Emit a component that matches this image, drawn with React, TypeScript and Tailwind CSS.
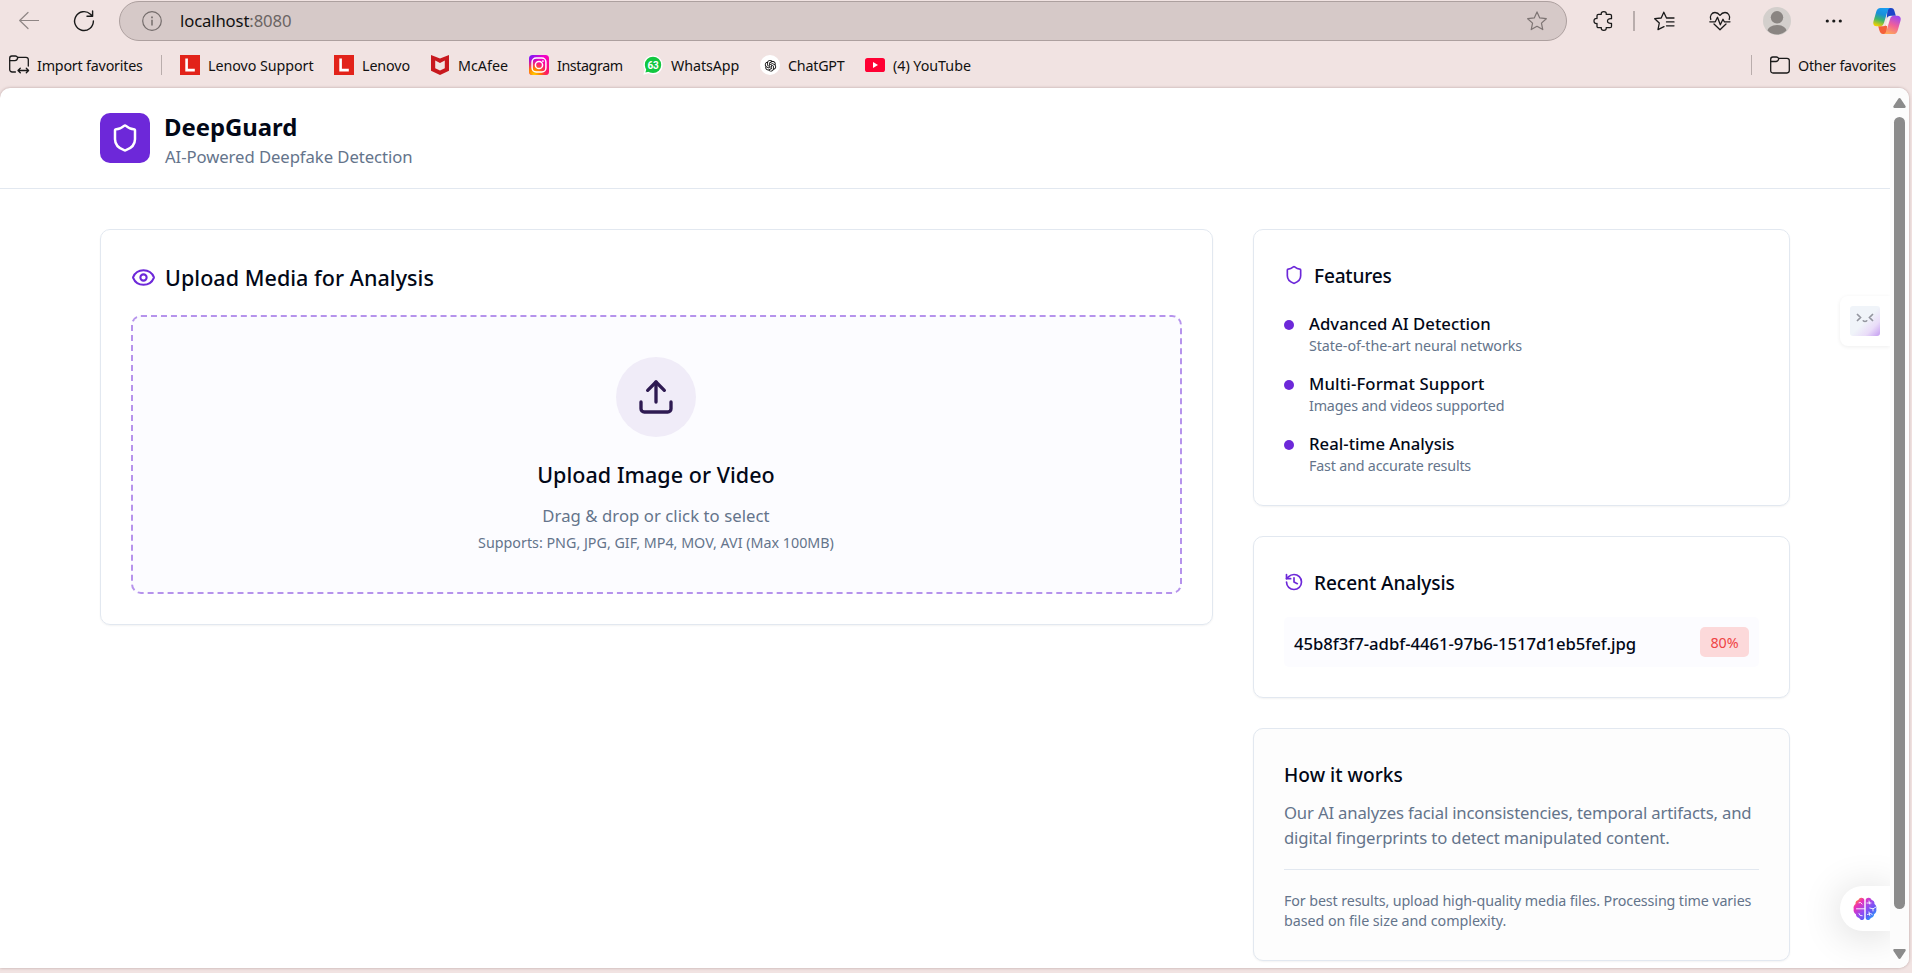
import type { ReactNode } from "react";
import { Eye, History, Shield, Upload } from "lucide-react";
import { AiOutlineOpenAI } from "react-icons/ai";

const features = [
  { title: "Advanced AI Detection", text: "State-of-the-art neural networks", titleClass: "tracking-[0.03px]", textClass: "tracking-[-0.08px]" },
  { title: "Multi-Format Support", text: "Images and videos supported", titleClass: "tracking-[0.14px]", textClass: "tracking-[-0.17px]" },
  { title: "Real-time Analysis", text: "Fast and accurate results", titleClass: "tracking-[0.02px]", textClass: "tracking-[-0.19px]" },
];

function Bookmark({ icon, label, className }: { icon: ReactNode; label: string; className: string }) {
  return (
    <div className={`flex h-full shrink-0 items-center gap-2 whitespace-nowrap ${className}`}>
      <span className="flex size-5 shrink-0 items-center justify-center">{icon}</span>
      <span className="pt-0.5">{label}</span>
    </div>
  );
}

function LenovoIcon() {
  return (
    <svg viewBox="0 0 20 20" className="size-5">
      <path d="M0 0h20v20H0z" fill="#e2231a" />
      <path d="M6.6 3.5v11.6h8.2" fill="none" stroke="#fff" strokeWidth="2.6" />
    </svg>
  );
}

function McAfeeIcon() {
  return (
    <svg viewBox="0 0 20 20" className="size-5">
      <path d="M1 0l9 3.6L19 0v15.8L10 20l-9-4.2z" fill="#c8181e" />
      <path d="M5.2 5.6L10 7.9l4.8-2.3v7.6L10 15.5l-4.8-2.3z" fill="#f1e3e2" />
    </svg>
  );
}

function InstagramIcon() {
  return (
    <svg viewBox="0 0 20 20" className="size-5">
      <defs>
        <linearGradient id="ig-base" x1="0" y1="0" x2="1" y2="0.9">
          <stop offset="0" stopColor="#6a1cff" />
          <stop offset="0.45" stopColor="#f500c8" />
          <stop offset="1" stopColor="#ff0f6b" />
        </linearGradient>
        <radialGradient id="ig-warm" cx="0.25" cy="1" r="0.85">
          <stop offset="0" stopColor="#ffd000" />
          <stop offset="0.4" stopColor="#ff7a00" />
          <stop offset="1" stopColor="#ff0069" stopOpacity="0" />
        </radialGradient>
      </defs>
      <rect width="20" height="20" rx="3.5" fill="url(#ig-base)" />
      <rect width="20" height="20" rx="3.5" fill="url(#ig-warm)" />
      <rect x="3.1" y="3.1" width="13.8" height="13.8" rx="4" fill="none" stroke="#fff" strokeWidth="1.5" />
      <circle cx="10" cy="10" r="3.6" fill="none" stroke="#fff" strokeWidth="1.5" />
      <circle cx="13.9" cy="6.1" r="0.9" fill="#fff" />
    </svg>
  );
}

function WhatsAppIcon() {
  return (
    <svg viewBox="0 0 20 20" className="size-5">
      <path d="M10.2.6a9.4 9.4 0 1 1-4.6 17.6L.3 19.7l1.4-5.1A9.4 9.4 0 0 1 10.2.6z" fill="#fff" />
      <circle cx="10" cy="9.9" r="8.2" fill="#12c740" />
      <path d="M2.4 17.6l1.2-4.4 3.2 3.3z" fill="#12c740" />
      <text x="10.1" y="13.6" textAnchor="middle" fontFamily="Roboto, sans-serif" fontWeight="700" fontSize="10" fill="#fff">63</text>
    </svg>
  );
}

function YouTubeIcon() {
  return (
    <svg viewBox="0 0 20 20" className="size-5">
      <rect y="3" width="20" height="14" rx="2.6" fill="#ff0033" />
      <path d="M8 7v6l5-3z" fill="#fff" />
    </svg>
  );
}

function FolderIcon({ importing = false }: { importing?: boolean }) {
  return (
    <svg viewBox="0 0 20 20" className="size-5 overflow-visible" fill="none" stroke="#1a1a1a" strokeWidth="1.3" strokeLinecap="round" strokeLinejoin="round">
      {importing ? (
        <>
          <path d="M6.4 17H3.2C1.7 17 .7 16 .7 14.5V3.2C.7 1.9 1.5 1 2.8 1H6.5C7.3 1 8 1.4 8.6 2.3H17C18.5 2.3 19.3 3.2 19.3 4.6V11" />
          <path d="M.7 5.6H6C7.2 5.6 8.3 4.8 8.9 2.5" />
          <path d="M9.3 15.5H19.3M11.3 13.3L9 15.5 11.3 17.8M17.3 13.3L19.6 15.5 17.3 17.8" />
        </>
      ) : (
        <>
          <path d="M.7 4.2C.7 2.8 1.5 2 2.8 2H6.5C7.3 2 8 2.4 8.6 3.4H17C18.5 3.4 19.3 4.2 19.3 5.6V15.6C19.3 17.2 18.5 18 17 18H3C1.5 18 .7 17.2 .7 15.6z" />
          <path d="M.7 6.5H6C7.2 6.5 8.3 5.6 8.9 3.6" />
        </>
      )}
    </svg>
  );
}

function StarIcon({ className }: { className: string }) {
  return (
    <svg viewBox="0 0 20 20" className={className} fill="none" stroke="currentColor" strokeWidth="1.2" strokeLinejoin="round">
      <path d="M10 .9l2.75 6 6.55.8-4.85 4.4 1.3 6.5L10 15.3l-5.75 3.3 1.3-6.5L.7 7.7l6.55-.8z" />
    </svg>
  );
}

function CopilotIcon() {
  return (
    <svg viewBox="0 0 28 26" className="h-[26px] w-7">
      <defs>
        <linearGradient id="cp-left" x1="0.6" y1="0" x2="0.3" y2="1">
          <stop offset="0" stopColor="#1a9df0" />
          <stop offset="0.35" stopColor="#1a8fd8" />
          <stop offset="0.65" stopColor="#3fb56a" />
          <stop offset="1" stopColor="#f0d000" />
        </linearGradient>
        <linearGradient id="cp-right" x1="0.7" y1="0" x2="0.3" y2="1">
          <stop offset="0" stopColor="#a048f0" />
          <stop offset="0.5" stopColor="#f0609a" />
          <stop offset="1" stopColor="#ffa858" />
        </linearGradient>
      </defs>
      <path d="M14.5 0H18c2 0 2.9 1.2 3.5 3.2l1.3 4.6H18c-2.2 0-3.5.8-4.2 2.6z" fill="#1c46c8" />
      <path d="M13.5 26H10c-2 0-2.9-1.2-3.500-3.2l-1.3-4.6H10c2.2 0 3.5-.8 4.2-2.6z" fill="#f4603a" />
      <path d="M7.5 0H17.5C15.3.4 14.7 2.5 14 4.8L11 14.8C10.2 17.3 9 18.2 6.8 18.2H3.6C.9 18.2-.3 16.2.5 13.2L3.3 3.6C4 1.2 5.2 0 7.5 0z" fill="url(#cp-left)" />
      <path d="M20.5 26H10.5C12.7 25.6 13.3 23.5 14 21.2L17 11.2C17.8 8.7 19 7.8 21.2 7.8H24.4C27.1 7.8 28.3 9.8 27.5 12.8L24.7 22.4C24 24.8 22.8 26 20.5 26z" fill="url(#cp-right)" />
      <path d="M12.6 17.8L15.2 9.6Q15.8 8 17.6 8H18.600Q17 8.8 16.400 10.8L14.400 17.6Q14 18.4 12.600 17.8z" fill="#fbeef0" />
    </svg>
  );
}

function BrainIcon() {
  return (
    <svg viewBox="0 0 24 24" className="h-6 w-6">
      <defs>
        <linearGradient id="brain-fill" x1="0.1" y1="0.05" x2="0.95" y2="0.9">
          <stop offset="0" stopColor="#ff9a1f" />
          <stop offset="0.2" stopColor="#ee2fb4" />
          <stop offset="0.5" stopColor="#9a4bf0" />
          <stop offset="0.75" stopColor="#5b5cf5" />
          <stop offset="1" stopColor="#1fb4ff" />
        </linearGradient>
      </defs>
      <path
        d="M11.3 2.8C11 1.3 9.7.6 8.3.7 6.7.8 5.6 1.8 5.4 3.1 3.5 3.5 2.3 5 2.5 7 .9 8 .2 10 .7 12c-.5 2.2.4 4.3 2.2 5.2.1 2 1.4 3.5 3.3 3.8.6 1.4 1.8 2.2 3.2 2 1.2-.2 1.9-1.2 1.9-2.5zM12.7 2.8C13 1.3 14.3.6 15.7.7c1.6.1 2.7 1.1 2.9 2.4 1.9.4 3.1 1.9 2.9 3.900C23.1 8 23.8 10 23.3 12c.5 2.2-.4 4.3-2.2 5.2-.1 2-1.4 3.5-3.3 3.8-.6 1.4-1.8 2.2-3.2 2-1.2-.2-1.9-1.2-1.9-2.5z"
        fill="url(#brain-fill)"
      />
      <path d="M11.5 11.8H3.5M6 5.8l1.5-.3 1.6 1.5M6 16.5l1.2 2 2 .2M14 6h4M16 4l.7 3M14.5 17.5l3.2-1 1.5 1M16 15l.8 3.5M23 10l-3 1.8-3.2-.8M20 12v2" fill="none" stroke="#fff" strokeWidth="0.9" strokeLinecap="round" />
    </svg>
  );
}

function Toolbar() {
  return (
    <div className="flex h-[42px] shrink-0 items-start">
      <div className="flex h-[42px] w-[119px] shrink-0 items-center pl-[19px]">
        <svg viewBox="0 0 20 20" className="size-5" fill="none" stroke="#8f8685" strokeWidth="1.2" strokeLinecap="round" strokeLinejoin="round">
          <path d="M19.5 9.5H.7M9 1.5L.7 9.5 9 17.5" />
        </svg>
        <svg viewBox="0 0 20 20" className="ml-[35px] size-5 overflow-visible" fill="none" stroke="#1a1a1a" strokeWidth="1.4" strokeLinecap="round" strokeLinejoin="round">
          <path d="M19.4 10A9.4 9.4 0 1 1 16.5 3.3L18.3 5M18.6 0V5.3H13" />
        </svg>
      </div>
      <div className="mt-px flex h-10 w-[1448px] shrink-0 items-center rounded-full border border-[#ada09f] bg-[#d6c9c8] pr-[19px] pl-[22px]">
        <svg viewBox="0 0 20 20" className="size-5" fill="none" stroke="#746c6b" strokeWidth="1.2">
          <circle cx="10" cy="10" r="9.3" />
          <path d="M10 8.8V14.5" strokeWidth="1.5" />
          <path d="M10 5.5V7.2" strokeWidth="1.7" />
        </svg>
        <p className="ml-[18px] flex-1 pb-0.5 text-[16.7px] leading-[25px] tracking-[-0.13px] text-[#111]">
          localhost<span className="text-[#6b6463]">:8080</span>
        </p>
        <StarIcon className="size-5 text-[#7d7473]" />
      </div>
      <div className="flex h-[42px] flex-1 items-center pl-[26px]">
        <svg viewBox="0 0 20 20" className="size-5 shrink-0" fill="none" stroke="#1a1a1a" strokeWidth="1.3" strokeLinejoin="round">
          <path d="M5.500 3.300H8.300C8 1.500 9 .7 10.800 .7S13.500 1.500 13.200 3.300H17C18 3.300 18.500 3.800 18.500 4.800V7.700C15.500 7.400 14.500 8.500 14.500 10S15.500 12.600 18.500 12.300V15.200C18.500 16.200 18 16.700 17 16.700H13.200C13.500 18.500 12.500 19.300 10.800 19.300S8 18.500 8.300 16.700H5.500C4.500 16.700 4 16.200 4 15.200V12.500C2 12.800 1 11.600 1 10S2 7.200 4 7.500V4.800C4 3.800 4.500 3.300 5.500 3.300z" />
        </svg>
        <span className="ml-5 h-5 w-0.5 shrink-0 bg-[#b9adac]" />
        <svg viewBox="0 0 20 20" className="ml-[19px] size-5 shrink-0 overflow-visible" fill="none" stroke="#1a1a1a" strokeWidth="1.3" strokeLinecap="round" strokeLinejoin="round">
          <path d="M12.500 7L9.800 1.200 7.200 7 .7 7.700 5.300 12 4 18.700 10 15.600M12.500 10.900H20M12.500 14.800H20M12.500 7H20" />
        </svg>
        <svg viewBox="0 0 22 20" className="ml-[35px] h-5 w-[22px] shrink-0" fill="none" stroke="#1a1a1a" strokeWidth="1.3" strokeLinecap="round" strokeLinejoin="round">
          <path d="M1.800 8.500C.4 4.500 3 1.500 6 1.500c2.200 0 3.800 1.200 5 2.800 1.200-1.600 2.800-2.800 5-2.800 3 0 5.600 3 4.200 7M.8 10.800H6.300L8.500 6.300 11.300 13.800 14 8.300 15.300 10.800H21M5 13l6 5.700 6-5.700" />
        </svg>
        <svg viewBox="0 0 28 28" className="ml-8 size-7 shrink-0">
          <defs>
            <clipPath id="avatar-clip"><circle cx="14" cy="14" r="13.500" /></clipPath>
          </defs>
          <circle cx="14" cy="14" r="14" fill="#d3cfcc" />
          <circle cx="14" cy="10.300" r="6.200" fill="#8a8582" />
          <ellipse cx="14" cy="25" rx="10" ry="7" fill="#8a8582" clipPath="url(#avatar-clip)" />
        </svg>
        <svg viewBox="0 0 18 4" className="ml-[34px] h-1 w-[18px] shrink-0" fill="#1a1a1a">
          <circle cx="2.300" cy="2" r="1.600" />
          <circle cx="8.800" cy="2" r="1.600" />
          <circle cx="15.300" cy="2" r="1.600" />
        </svg>
        <div className="ml-[30px] shrink-0"><CopilotIcon /></div>
      </div>
    </div>
  );
}

function BookmarksBar() {
  return (
    <div className="flex h-[46px] shrink-0 items-center pl-[9px] text-[14.3px] leading-5 text-[#111]">
      <Bookmark className="w-[152px] tracking-[-0.2px]" icon={<FolderIcon importing />} label="Import favorites" />
      <span className="mr-[18px] h-5 w-px shrink-0 bg-[#b9adac]" />
      <Bookmark className="w-[154px] tracking-[-0.06px]" icon={<LenovoIcon />} label="Lenovo Support" />
      <Bookmark className="w-24 tracking-[-0.11px]" icon={<LenovoIcon />} label="Lenovo" />
      <Bookmark className="w-[99px]" icon={<McAfeeIcon />} label="McAfee" />
      <Bookmark className="w-[114px] tracking-[-0.42px]" icon={<InstagramIcon />} label="Instagram" />
      <Bookmark className="w-[117px] tracking-[-0.09px]" icon={<WhatsAppIcon />} label="WhatsApp" />
      <Bookmark
        className="w-[105px] tracking-[-0.22px]"
        icon={
          <span className="flex size-5 items-center justify-center rounded-full bg-white">
            <AiOutlineOpenAI className="size-[15px]" />
          </span>
        }
        label="ChatGPT"
      />
      <Bookmark className="flex-1 tracking-[-0.03px]" icon={<YouTubeIcon />} label="(4) YouTube" />
      <span className="mr-[18px] h-5 w-px shrink-0 bg-[#b9adac]" />
      <Bookmark className="w-[142px] tracking-[-0.24px]" icon={<FolderIcon />} label="Other favorites" />
    </div>
  );
}

function Header() {
  return (
    <header className="flex h-[101px] shrink-0 items-center gap-[15px] border-b border-[#e2e8f0] px-[100px]">
      <div className="flex size-[50px] items-center justify-center rounded-[10px] bg-[#6d28d9]">
        <Shield className="size-[30px] text-white" strokeWidth={2} />
      </div>
      <div className="mt-[7px]">
        <h1 className="-ml-px text-[23.9px] leading-[30px] font-bold tracking-[-0.04px] text-[#020817]">DeepGuard</h1>
        <p className="text-[16.7px] leading-[29px] tracking-[-0.07px] text-[#64748b]">AI-Powered Deepfake Detection</p>
      </div>
    </header>
  );
}

function UploadCard() {
  return (
    <section className="h-[396px] rounded-[10px] border border-[#e2e8f0] p-[30px] shadow-xs">
      <div className="flex h-[35px] items-center gap-[9px]">
        <Eye className="size-[25px] text-[#6d28d9]" />
        <h2 className="text-[21.5px] leading-[35px] font-medium tracking-[0.05px] text-[#020817]">Upload Media for Analysis</h2>
      </div>
      <div className="mt-5 flex h-[279px] flex-col items-center rounded-[10px] border-2 border-dashed border-[#b693ec] bg-[#fcfcff] pt-10 pr-px whitespace-nowrap">
        <div className="flex size-20 items-center justify-center rounded-full bg-[#f0ecf8]">
          <Upload className="size-10 text-[#2e1a52]" />
        </div>
        <h3 className="mt-5 text-[21.5px] leading-[35px] font-medium tracking-[0.05px] text-[#020817]">Upload Image or Video</h3>
        <p className="mt-[10px] text-[16.7px] leading-[27px] tracking-[0.06px] text-[#64748b]">Drag &amp; drop or click to select</p>
        <p className="text-[14.3px] leading-[27px] text-[#64748b]">Supports: PNG, JPG, GIF, MP4, MOV, AVI (Max 100MB)</p>
      </div>
    </section>
  );
}

function Sidebar() {
  return (
    <aside className="flex flex-col gap-[30px]">
      <section className="h-[277px] rounded-[10px] border border-[#e2e8f0] p-[30px] shadow-xs">
        <div className="flex h-[30px] items-center gap-[10px]">
          <Shield className="size-5 text-[#6d28d9]" />
          <h2 className="pt-0.5 text-[19.1px] leading-[30px] font-medium tracking-[-0.2px] text-[#020817]">Features</h2>
        </div>
        <ul className="mt-[21px] flex flex-col gap-[15px]">
          {features.map((f) => (
            <li key={f.title} className="flex gap-[15px]">
              <span className="mt-[9px] size-[10px] shrink-0 rounded-full bg-[#6d28d9]" />
              <div>
                <p className={`text-[16.7px] leading-[25px] font-medium text-[#020817] ${f.titleClass}`}>{f.title}</p>
                <p className={`text-[14.3px] leading-5 text-[#64748b] ${f.textClass}`}>{f.text}</p>
              </div>
            </li>
          ))}
        </ul>
      </section>

      <section className="h-[162px] rounded-[10px] border border-[#e2e8f0] p-[30px] shadow-xs">
        <div className="flex h-[30px] items-center gap-[10px]">
          <History className="size-5 text-[#6d28d9]" />
          <h2 className="pt-0.5 text-[19.1px] leading-[30px] font-medium tracking-[-0.08px] text-[#020817]">Recent Analysis</h2>
        </div>
        <div className="mt-5 flex h-[50px] items-center justify-between rounded-[5px] bg-[#fcfcff] px-[10px]">
          <p className="pt-0.5 text-[16.7px] leading-[25px] font-medium tracking-[-0.03px] text-[#020817]">45b8f3f7-adbf-4461-97b6-1517d1eb5fef.jpg</p>
          <span className="flex h-[30px] w-[49px] items-center justify-center rounded-[5px] bg-[#fcd9da] pt-px text-[14.3px] leading-5 text-[#ef4444]">80%</span>
        </div>
      </section>

      <section className="h-[233px] rounded-[10px] border border-[#e2e8f0] bg-[#fdfdfd] p-[30px] whitespace-nowrap shadow-xs">
        <h2 className="pt-px text-[19.1px] leading-[30px] font-medium tracking-[0.03px] text-[#020817]">How it works</h2>
        <div className="mt-[10px] text-[16.7px] leading-[25px] text-[#64748b]">
          <p className="tracking-[-0.17px]">Our AI analyzes facial inconsistencies, temporal artifacts, and</p>
          <p className="tracking-[-0.14px]">digital fingerprints to detect manipulated content.</p>
        </div>
        <hr className="mt-[19px] border-[#e2e8f0]" />
        <div className="mt-[21px] text-[14.3px] leading-5 text-[#64748b]">
          <p className="tracking-[-0.12px]">For best results, upload high-quality media files. Processing time varies</p>
          <p className="tracking-[-0.05px]">based on file size and complexity.</p>
        </div>
      </section>
    </aside>
  );
}

function FloatingButtons() {
  return (
    <>
      <div className="absolute top-[208px] right-[19px] flex h-[50px] w-[50px] items-center rounded-l-lg bg-white pl-[10px] shadow-[0_1px_4px_rgba(0,0,0,0.07)]">
        <div className="flex size-[30px] justify-center rounded-[3px] bg-linear-to-br from-[#f0f4f9] from-50% via-[#e9dcf8] via-75% to-[#c49cf0] pt-[7px]">
          <svg viewBox="0 0 18 10" className="h-[10px] w-[18px]" fill="none" stroke="#94969f" strokeWidth="1.700">
            <path d="M1 1l3.500 3.500L1 8M17 1l-3.500 3.500L17 8M7 7.300c.5 1.600 3.500 1.600 4 0" />
          </svg>
        </div>
      </div>
      <div className="absolute top-[798px] right-[19px] flex h-[45px] w-[50px] items-center rounded-l-full bg-white pl-[13px] shadow-[0_4px_40px_rgba(0,0,0,0.16)]">
        <BrainIcon />
      </div>
    </>
  );
}

function Scrollbar() {
  return (
    <div className="relative flex w-[19px] shrink-0 flex-col items-center bg-[#fcfcfc] pt-[10px] pr-px">
      <svg viewBox="0 0 13 10" className="h-[10px] w-[13px]" fill="#8b8b8b">
        <path d="M5.3.8a1.4 1.4 0 0 1 2.4 0l4.8 7.2c.5.9.1 2-.9 2H1.4c-1 0-1.4-1.1-.9-2z" />
      </svg>
      <span className="mt-[9px] h-[792px] w-[11px] rounded-full bg-[#8b8b8b]" />
      <svg viewBox="0 0 13 10" className="mt-10 h-[10px] w-[13px]" fill="#8b8b8b">
        <path d="M5.3 9.2a1.4 1.4 0 0 0 2.4 0l4.8-7.2c.5-.9.1-2-.9-2H1.4c-1 0-1.4 1.1-.9 2z" />
      </svg>
    </div>
  );
}

export default function App() {
  return (
    <div className="flex h-[973px] w-[1912px] flex-col overflow-hidden bg-[#f1e3e2] font-['Noto_Sans',sans-serif]">
      <Toolbar />
      <BookmarksBar />
      <div className="relative flex h-[880px] w-[1909px] overflow-hidden rounded-t-[10px] rounded-br-[10px] bg-white shadow-[0_0_3px_rgba(80,40,40,0.35)]">
        <div className="flex flex-1 flex-col">
          <Header />
          <main className="grid grid-cols-[1113px_537px] items-start gap-10 px-[100px] pt-10">
            <UploadCard />
            <Sidebar />
          </main>
        </div>
        <FloatingButtons />
        <Scrollbar />
      </div>
    </div>
  );
}
